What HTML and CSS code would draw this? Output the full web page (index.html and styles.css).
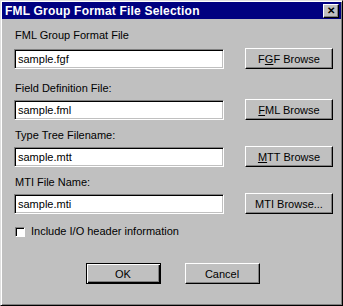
FILE: index.html
```html
<!DOCTYPE html>
<html lang="en">
<head>
    <meta charset="UTF-8">
    <meta name="viewport" content="width=device-width, initial-scale=1.0">
    <title>FML Group Format File Selection</title>
    <link rel="stylesheet" href="styles.css">
</head>
<body>

<div class="dialog">
    <div class="title-bar">
        <span class="title">FML Group Format File Selection</span>
        <span class="close-btn">&#x2715;</span>
    </div>

    <div class="content">
        <div class="field first">
            <label>FML Group Format File</label>
            <div class="row">
                <div class="text-box">sample.fgf</div>
                <div class="btn">F<u>G</u>F Browse</div>
            </div>
        </div>

        <div class="field">
            <label>Field Definition File:</label>
            <div class="row">
                <div class="text-box">sample.fml</div>
                <div class="btn"><u>F</u>ML Browse</div>
            </div>
        </div>

        <div class="field">
            <label>Type Tree Filename:</label>
            <div class="row">
                <div class="text-box">sample.mtt</div>
                <div class="btn"><u>M</u>TT Browse</div>
            </div>
        </div>

        <div class="field">
            <label>MTI File Name:</label>
            <div class="row">
                <div class="text-box">sample.mti</div>
                <div class="btn">MTI Browse...</div>
            </div>
        </div>

        <div class="check-row">
            <span class="checkbox"></span>
            <span>Include I/O header information</span>
        </div>

        <div class="actions">
            <div class="btn default">OK</div>
            <div class="btn">Cancel</div>
        </div>
    </div>
</div>

</body>
</html>
```

FILE: styles.css
```css
body {
    margin: 0;
    font-family: "Liberation Sans", Arial, sans-serif;
    font-size: 11px;
    color: #000;
    background-color: #c0c0c0;
}
.dialog {
    box-sizing: border-box;
    width: 343px;
    height: 306px;
    background-color: #c0c0c0;
    border-top: 1px solid #dfdfdf;
    border-left: 1px solid #dfdfdf;
    border-right: 1px solid #000;
    border-bottom: 1px solid #000;
    box-shadow: inset 1px 1px 0 #fff, inset -1px -1px 0 #808080;
    padding: 1px 1px 0 1px;
}
.title-bar {
    height: 17px;
    background-color: #000080;
    color: #fff;
    display: flex;
    align-items: center;
    justify-content: space-between;
    padding: 0 2px 0 3px;
}
.title {
    font-weight: bold;
    font-size: 12px;
    letter-spacing: 0.2px;
}
.close-btn {
    box-sizing: border-box;
    width: 16px;
    height: 14px;
    background-color: #c0c0c0;
    color: #000;
    font-size: 10px;
    font-weight: bold;
    line-height: 12px;
    text-align: center;
    border-top: 1px solid #fff;
    border-left: 1px solid #fff;
    border-right: 1px solid #000;
    border-bottom: 1px solid #000;
    box-shadow: inset -1px -1px 0 #808080;
}
.content {
    padding: 10px 0 0 12px;
}
.field {
    margin-top: 9px;
}
.field.first {
    margin-top: 0;
}
.field:nth-child(2) {
    margin-top: 13px;
}
label {
    display: block;
    line-height: 12px;
    margin: 0 0 5px 1px;
}
.field.first label {
    margin-bottom: 7px;
}
.row {
    display: flex;
    align-items: center;
    gap: 21px;
}
.text-box {
    box-sizing: border-box;
    width: 210px;
    height: 20px;
    background-color: #fff;
    border-top: 1px solid #808080;
    border-left: 1px solid #808080;
    border-right: 1px solid #fff;
    border-bottom: 1px solid #fff;
    box-shadow: inset 1px 1px 0 #000, inset -1px -1px 0 #c0c0c0;
    padding: 0 3px;
    line-height: 18px;
}
.btn {
    box-sizing: border-box;
    width: 88px;
    height: 21px;
    display: flex;
    align-items: center;
    justify-content: center;
    border-top: 1px solid #fff;
    border-left: 1px solid #fff;
    border-right: 1px solid #000;
    border-bottom: 1px solid #000;
    box-shadow: inset -1px -1px 0 #808080;
}
.check-row {
    display: flex;
    align-items: center;
    gap: 6px;
    line-height: 13px;
    margin: 11px 0 0 1px;
}
.checkbox {
    box-sizing: border-box;
    width: 10px;
    height: 10px;
    background-color: #fff;
    border-top: 1px solid #808080;
    border-left: 1px solid #808080;
    border-right: 1px solid #fff;
    border-bottom: 1px solid #fff;
    box-shadow: inset 1px 1px 0 #000;
}
.actions {
    display: flex;
    justify-content: center;
    gap: 24px;
    margin: 25px 0 0 -10px;
}
.actions .btn {
    width: 75px;
}
.btn.default {
    border: 1px solid #000;
    box-shadow: inset 1px 1px 0 #fff, inset -1px -1px 0 #000, inset -2px -2px 0 #808080;
}
```
